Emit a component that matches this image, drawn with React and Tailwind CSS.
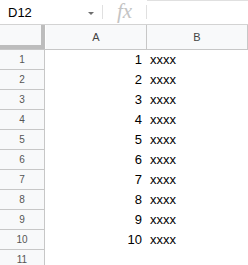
import React from "react";

const rows = [1, 2, 3, 4, 5, 6, 7, 8, 9, 10, 11];

export default function App() {
  return (
    <div className="w-[248px] h-[265px] overflow-hidden bg-white font-['Liberation_Sans',Arial,sans-serif]">
      {/* Formula bar */}
      <div className="flex h-[25px] border-b border-[#d3d3d3]">
        <div className="w-[102px] flex items-center pl-2 pr-[8px]">
          <span className="text-[13px] text-black flex-1 leading-none">D12</span>
          <span className="w-0 h-0 border-l-[3px] border-r-[3px] border-t-[3px] border-l-transparent border-r-transparent border-t-[#6e6e6e] mt-[2px]"></span>
        </div>
        <div className="w-px my-[5px] bg-[#e0e0e0]"></div>
        <div className="w-[43px] flex items-center justify-center">
          <span className="font-['Liberation_Serif',serif] italic text-[21px] text-[#c4c4c4] leading-none -mt-[1px]">fx</span>
        </div>
        <div className="w-px my-[5px] bg-[#e0e0e0]"></div>
        <div className="flex-1 border-t border-[#e0e0e0]"></div>
      </div>

      {/* Column headers */}
      <div className="flex h-[25px] border-b border-[#c7c7c7]">
        <div className="w-[45px] flex bg-[#f8f9fa]">
          <div className="flex-1 flex flex-col">
            <div className="flex-1"></div>
            <div className="h-[4px] bg-[#bdbdbd]"></div>
          </div>
          <div className="w-[4px] bg-[#bdbdbd]"></div>
        </div>
        <div className="w-px bg-white"></div>
        <div className="w-[101px] bg-[#f8f9fa] border-r border-[#c7c7c7] flex items-center justify-center text-[11px] text-[#444]">A</div>
        <div className="w-[101px] bg-[#f8f9fa] border-r border-[#c7c7c7] flex items-center justify-center text-[11px] text-[#444]">B</div>
      </div>

      {/* Rows */}
      {rows.map((r) => (
        <div key={r} className="flex h-[20px]">
          <div className="w-[45px] bg-[#f8f9fa] border-r border-b border-[#c7c7c7] flex items-center justify-center text-[10px] text-[#555]">
            {r}
          </div>
          <div className="w-[102px] flex items-center justify-end pr-[5px] text-[13px] text-black">
            {r <= 10 ? r : ""}
          </div>
          <div className="flex-1 flex items-center pl-[3px] text-[13px] text-black">
            {r <= 10 ? "xxxx" : ""}
          </div>
        </div>
      ))}
    </div>
  );
}
